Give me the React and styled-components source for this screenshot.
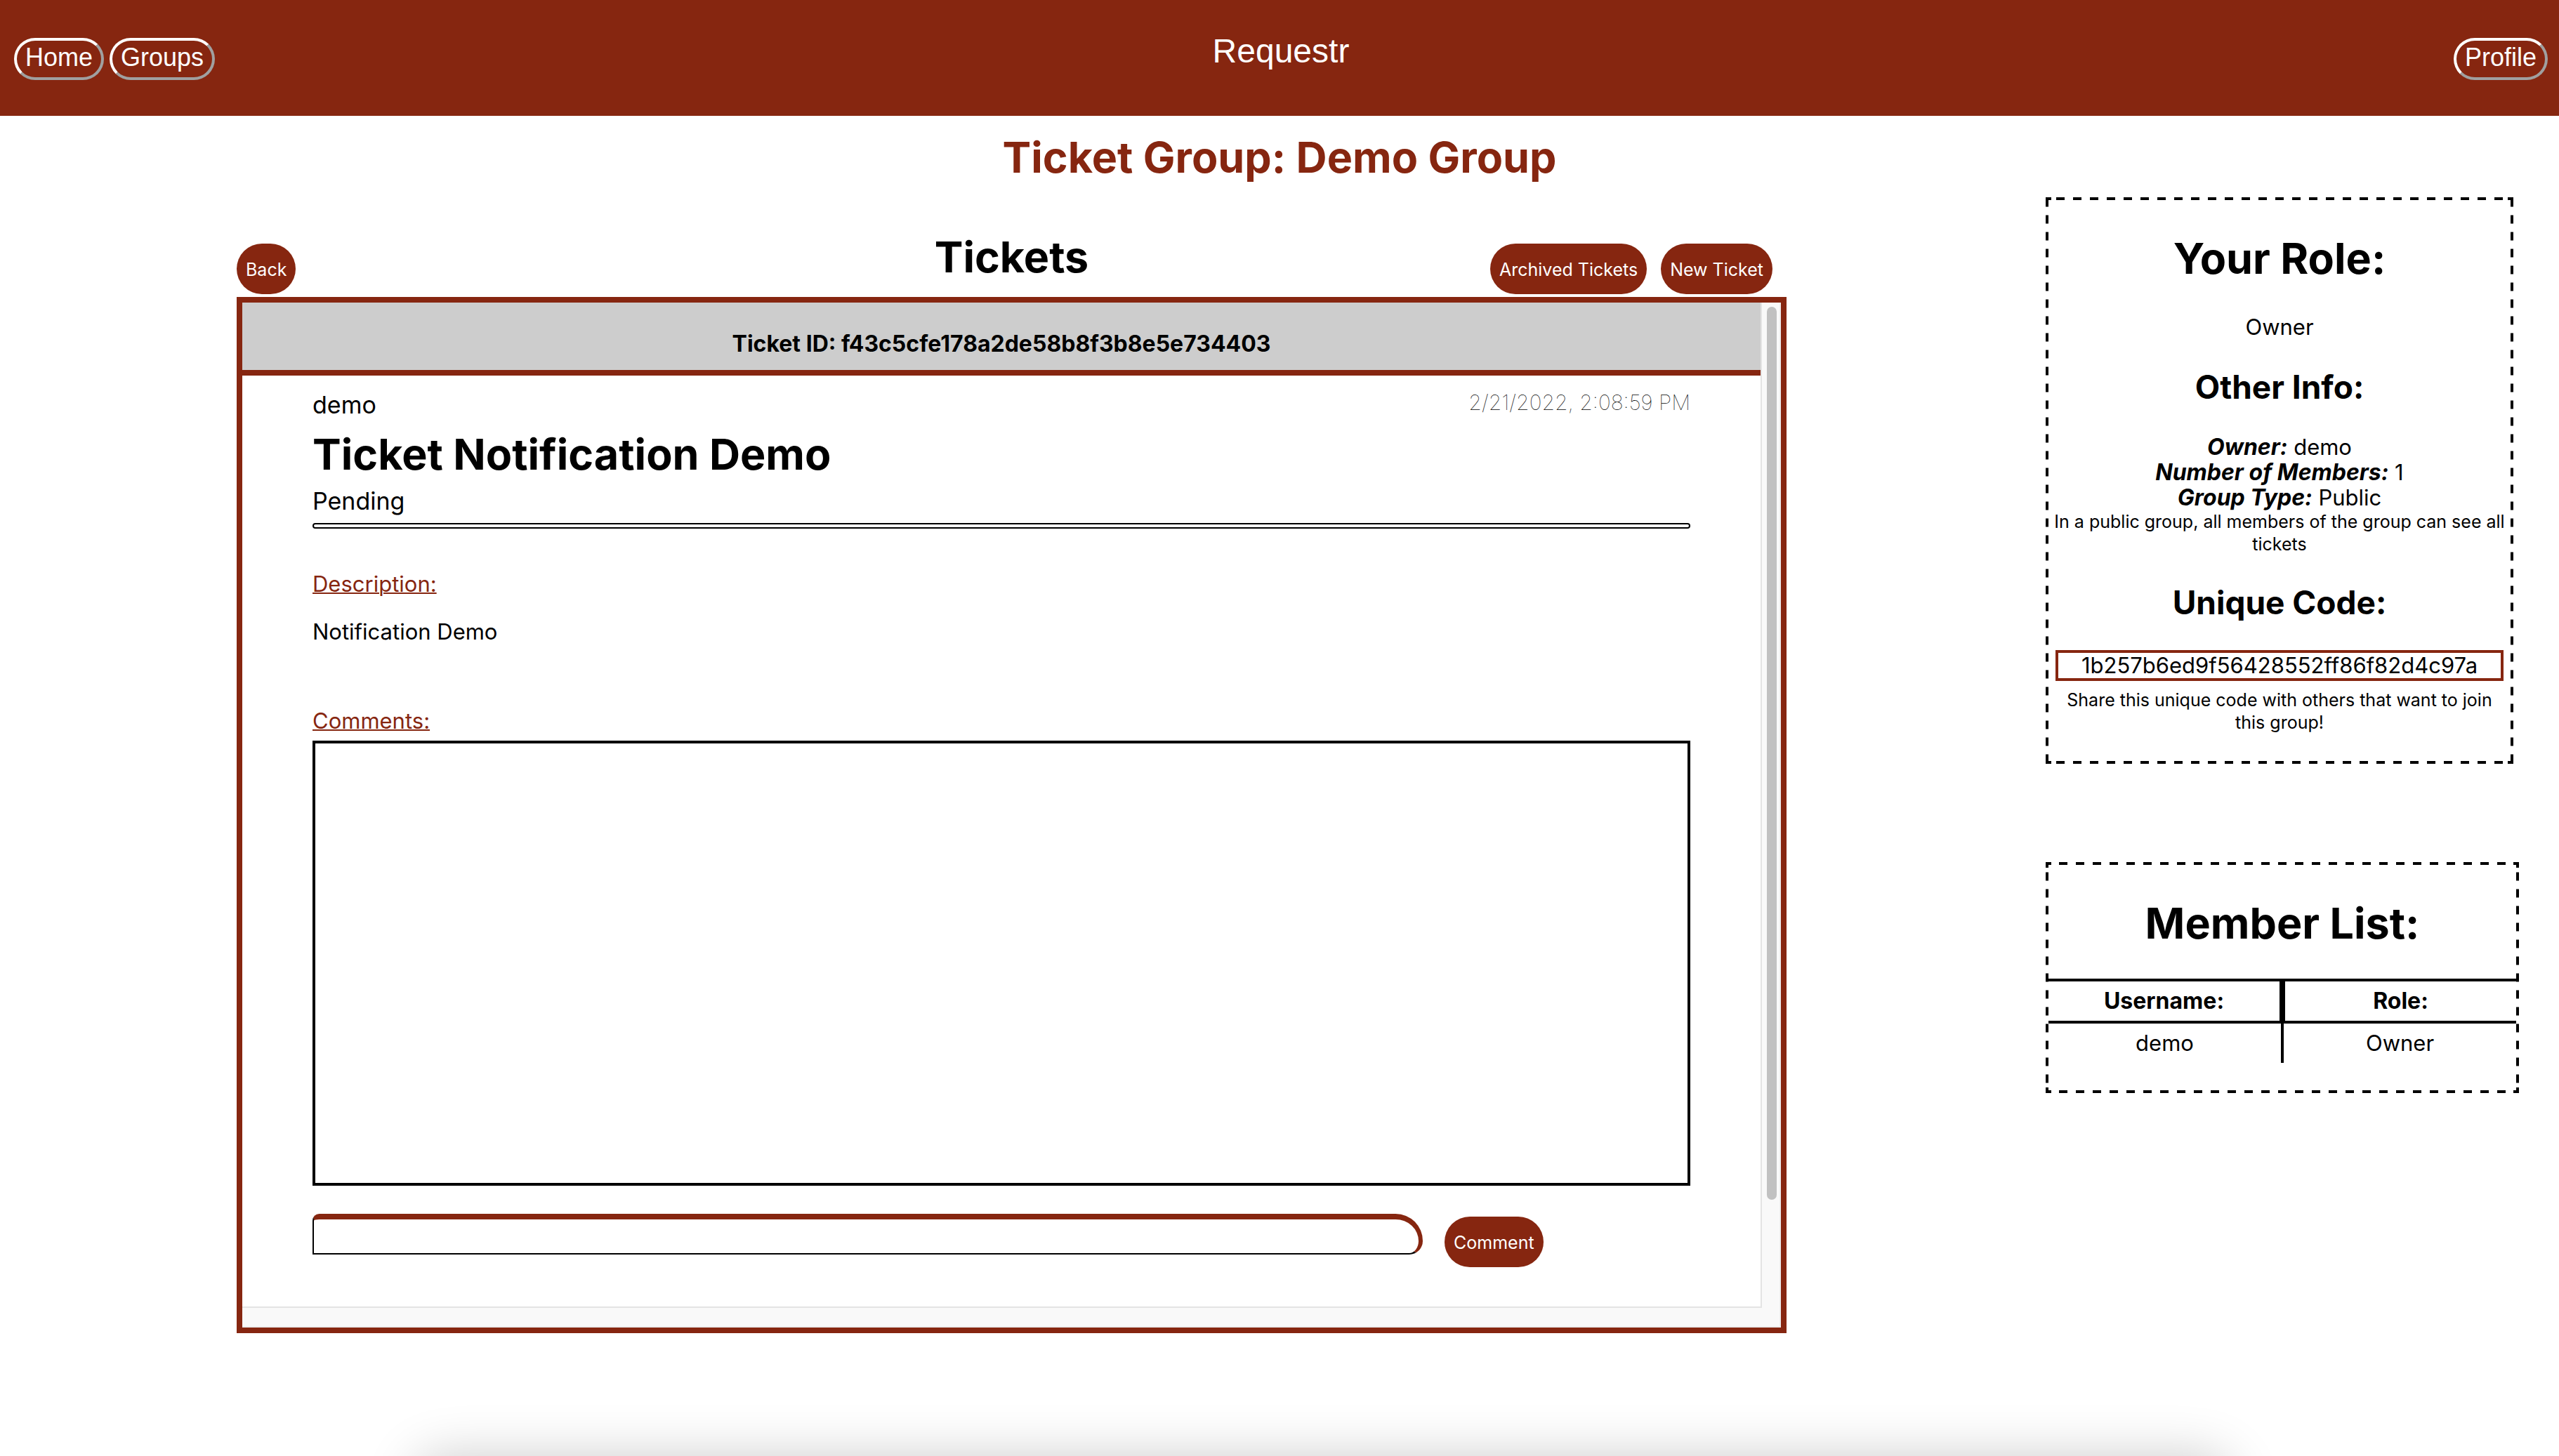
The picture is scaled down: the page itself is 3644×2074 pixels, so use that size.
import React from "react";
import styled, { createGlobalStyle, css } from "styled-components";

const brand = "#862610";

const GlobalStyle = createGlobalStyle`
  *, *::before, *::after { box-sizing: border-box; }
  body {
    margin: 0;
    background: #fff;
    color: #000;
    font-family: Inter, "Liberation Sans", sans-serif;
    font-size: 31px;
    line-height: 36px;
  }
  h1, h2, h3, p, dl, dd { margin: 0; }
`;

const Page = styled.div`
  display: flex;
  flex-direction: column;
  min-height: 100vh;
`;

const Header = styled.header`
  display: grid;
  grid-template-columns: 1fr auto 1fr;
  align-items: start;
  padding: 46px 16px 51px 20px;
  background: ${brand};
  color: #fff;
  font-family: "Liberation Sans", Arial, sans-serif;
`;

const Nav = styled.nav`
  display: flex;
  gap: 8px;
  padding-top: 8px;
  justify-content: ${(p) => (p.$end ? "flex-end" : "flex-start")};
`;

const NavButton = styled.button`
  padding: 0 12px 4px;
  height: 60px;
  border: 4px solid;
  border-color: #fff #a0a0a0 #a0a0a0 #fff;
  border-radius: 30px;
  background: transparent;
  color: #fff;
  font: 36px/48px "Liberation Sans", Arial, sans-serif;
`;

const Brand = styled.div`
  font-size: 48px;
  line-height: 54px;
`;

const Heading = styled.h1`
  font-size: 61px;
  line-height: 76px;
  font-weight: 700;
  text-align: ${(p) => p.$align || "center"};
  color: ${(p) => (p.$brand ? brand : "inherit")};
`;

const GroupHeading = styled(Heading)`
  padding-top: 21px;
`;

const Main = styled.main`
  display: flex;
  align-items: flex-start;
  gap: 369px;
  padding: 19px 57px 0 337px;
`;

const Tickets = styled.section`
  flex: 1;
  min-width: 0;
  padding-top: 47px;
`;

const Toolbar = styled.div`
  display: grid;
  grid-template-columns: 1fr auto 1fr;
  align-items: end;
  padding-bottom: 4px;
`;

const ToolbarTitle = styled(Heading)`
  padding-bottom: 15px;
`;

const Actions = styled.div`
  display: flex;
  gap: 20px;
  padding-right: ${(p) => (p.$end ? "20px" : "0")};
  justify-content: ${(p) => (p.$end ? "flex-end" : "flex-start")};
`;

const PillButton = styled.button`
  height: 72px;
  padding: 2px 13px 0;
  border: 0;
  border-radius: 36px;
  background: ${brand};
  color: #fff;
  font: 25px/32px Inter, "Liberation Sans", sans-serif;
  white-space: nowrap;
`;

const Panel = styled.div`
  display: grid;
  grid-template-columns: minmax(0, 1fr) 29px;
  grid-template-rows: auto 28px;
  border: 8px solid ${brand};
`;

const TrackY = styled.div`
  display: flex;
  padding: 6px 4px 154px 7px;
  border: solid #e4e4e4;
  border-width: 0 2px;
  border-right-color: #ededed;
  background: #f9f9f9;
`;

const Thumb = styled.div`
  flex: 1;
  border-radius: 8px;
  background: #c1c1c1;
`;

const TrackX = styled.div`
  grid-column: 1 / -1;
  border: solid #ededed;
  border-width: 0 2px 2px 0;
  background: #f9f9f9;
`;

const Ticket = styled.article`
  border-bottom: 2px solid #e4e4e4;
`;

const TicketId = styled.div`
  padding: 41px 0 19px;
  border-bottom: 8px solid ${brand};
  background: #cdcdcd;
  font-size: 32px;
  font-weight: 700;
  text-align: center;
`;

const TicketBody = styled.div`
  padding: 20px 100px 56px;
`;

const Meta = styled.div`
  display: flex;
  justify-content: space-between;
  padding-bottom: 10px;
`;

const Lead = styled.div`
  font-size: 34px;
  line-height: 44px;
`;

const Stamp = styled.time`
  font-size: 30px;
  font-weight: 100;
`;

const Status = styled(Lead)`
  padding: 7px 0 9px;
`;

const Rule = styled.hr`
  height: 8px;
  margin: 0 0 61px;
  border: 2px solid #000;
  border-radius: 4px;
`;

const FieldName = styled.label`
  display: block;
  color: ${brand};
  text-decoration: underline;
  text-decoration-thickness: 2px;
`;

const Description = styled.p`
  padding: 32px 0 91px;
`;

const CommentList = styled.div`
  height: 634px;
  margin: 10px 0 40px;
  border: 4px solid #000;
`;

const CommentForm = styled.form`
  display: flex;
  align-items: flex-start;
  gap: 31px;
`;

const CommentInput = styled.input`
  width: 1581px;
  height: 58px;
  padding: 0 8px;
  border-style: solid;
  border-width: 8px 6px 2px 2px;
  border-color: ${brand} ${brand} #000 #000;
  border-radius: 10px 40px 20px 0;
  background: #fff;
  font: inherit;
  outline: 0;
`;

const CommentSubmit = styled(PillButton)`
  margin-top: 4px;
`;

const Sidebar = styled.aside`
  display: flex;
  flex-direction: column;
  align-items: flex-start;
  gap: 140px;
  width: 674px;
  text-align: center;
`;

/* 12px dashes with 12px gaps, centred on every side, and solid corners */
const dash = (angle) =>
  `linear-gradient(${angle}, transparent 6px, #000 6px 18px, transparent 18px)`;
const gap = (angle) =>
  `linear-gradient(${angle}, #000 6px, transparent 6px 18px, #000 18px)`;
const solid = "linear-gradient(#000, #000)";

const dashedFrame = css`
  border: 4px solid transparent;
  background-origin: border-box;
  background-clip: border-box;
  background-image: ${dash("90deg")}, ${dash("90deg")},
    ${(p) => (p.$gapCentred ? gap("180deg") : dash("180deg"))},
    ${(p) => (p.$gapCentred ? gap("180deg") : dash("180deg"))},
    ${Array(8).fill(solid).join(", ")};
  background-size: 24px 4px, 24px 4px, 4px 24px, 4px 24px,
    8px 4px, 8px 4px, 8px 4px, 8px 4px, 4px 8px, 4px 8px, 4px 8px, 4px 8px;
  background-position: center top, center bottom, left center, right center,
    left top, right top, left bottom, right bottom,
    left top, right top, left bottom, right bottom;
  background-repeat: repeat-x, repeat-x, repeat-y, repeat-y,
    no-repeat, no-repeat, no-repeat, no-repeat,
    no-repeat, no-repeat, no-repeat, no-repeat;
`;

const Card = styled.section`
  width: ${(p) => p.$width};
  padding: 45px 0 39px;
  ${dashedFrame}
`;

const SubHeading = styled.h2`
  padding: 39px 0 40px;
  font-size: 46px;
  line-height: 56px;
  font-weight: 700;
`;

const Role = styled.p`
  padding-top: 42px;
`;

const Fact = styled.div`
  dt, dd { display: inline; }
  dt { font-size: 32px; font-weight: 700; font-style: italic; }
`;

const Note = styled.p`
  font-size: 25px;
  line-height: 32px;
`;

const Code = styled.div`
  margin: 0 10px 11px;
  border: 4px solid ${brand};
`;

const ShareNote = styled(Note)`
  margin: 0 10px;
`;

const Members = styled.table`
  width: 100%;
  margin-top: 41px;
  border-spacing: 0;
  table-layout: fixed;

  th, td { padding: 10px 0; border: 0 solid #000; }
  th { border-width: 4px 0; font-size: 32px; }
  th:first-child { border-right-width: 4px; }
  th:last-child { border-left-width: 4px; }
  td:first-child { border-right-width: 2px; }
  td:last-child { border-left-width: 2px; }
`;

const BottomEdge = styled.footer`
  flex: 1;
  display: flex;
  align-items: flex-end;
  overflow: hidden;
  padding: 0 467px 0 590px;
`;

const DockShadow = styled.div`
  flex: 1;
  height: 100px;
  margin-bottom: -100px;
  border-radius: 40px;
  box-shadow: 0 0 75px rgba(0, 0, 0, 0.2);
`;

export default function App() {
  return (
    <Page>
      <GlobalStyle />
      <Header>
        <Nav>
          <NavButton>Home</NavButton>
          <NavButton>Groups</NavButton>
        </Nav>
        <Brand>Requestr</Brand>
        <Nav $end>
          <NavButton>Profile</NavButton>
        </Nav>
      </Header>
      <GroupHeading $brand>Ticket Group: Demo Group</GroupHeading>
      <Main>
        <Tickets>
          <Toolbar>
            <Actions>
              <PillButton>Back</PillButton>
            </Actions>
            <ToolbarTitle as="h2">Tickets</ToolbarTitle>
            <Actions $end>
              <PillButton>Archived Tickets</PillButton>
              <PillButton>New Ticket</PillButton>
            </Actions>
          </Toolbar>
          <Panel>
            <Ticket>
              <TicketId>Ticket ID: f43c5cfe178a2de58b8f3b8e5e734403</TicketId>
              <TicketBody>
                <Meta>
                  <Lead>demo</Lead>
                  <Stamp>2/21/2022, 2:08:59 PM</Stamp>
                </Meta>
                <Heading as="h2" $align="left">Ticket Notification Demo</Heading>
                <Status>Pending</Status>
                <Rule />
                <FieldName as="div">Description:</FieldName>
                <Description>Notification Demo</Description>
                <FieldName htmlFor="comment">Comments:</FieldName>
                <CommentList />
                <CommentForm onSubmit={(e) => e.preventDefault()}>
                  <CommentInput id="comment" type="text" />
                  <CommentSubmit type="submit">Comment</CommentSubmit>
                </CommentForm>
              </TicketBody>
            </Ticket>
            <TrackY>
              <Thumb />
            </TrackY>
            <TrackX />
          </Panel>
        </Tickets>
        <Sidebar>
          <Card $width="666px" $gapCentred>
            <Heading as="h2">Your Role:</Heading>
            <Role>Owner</Role>
            <SubHeading>Other Info:</SubHeading>
            <dl>
              <Fact><dt>Owner:</dt> <dd>demo</dd></Fact>
              <Fact><dt>Number of Members:</dt> <dd>1</dd></Fact>
              <Fact><dt>Group Type:</dt> <dd>Public</dd></Fact>
            </dl>
            <Note>In a public group, all members of the group can see all tickets</Note>
            <SubHeading>Unique Code:</SubHeading>
            <Code>1b257b6ed9f56428552ff86f82d4c97a</Code>
            <ShareNote>Share this unique code with others that want to join this group!</ShareNote>
          </Card>
          <Card $width="100%">
            <Heading as="h2">Member List:</Heading>
            <Members>
              <thead>
                <tr><th>Username:</th><th>Role:</th></tr>
              </thead>
              <tbody>
                <tr><td>demo</td><td>Owner</td></tr>
              </tbody>
            </Members>
          </Card>
        </Sidebar>
      </Main>
      <BottomEdge>
        <DockShadow />
      </BottomEdge>
    </Page>
  );
}
